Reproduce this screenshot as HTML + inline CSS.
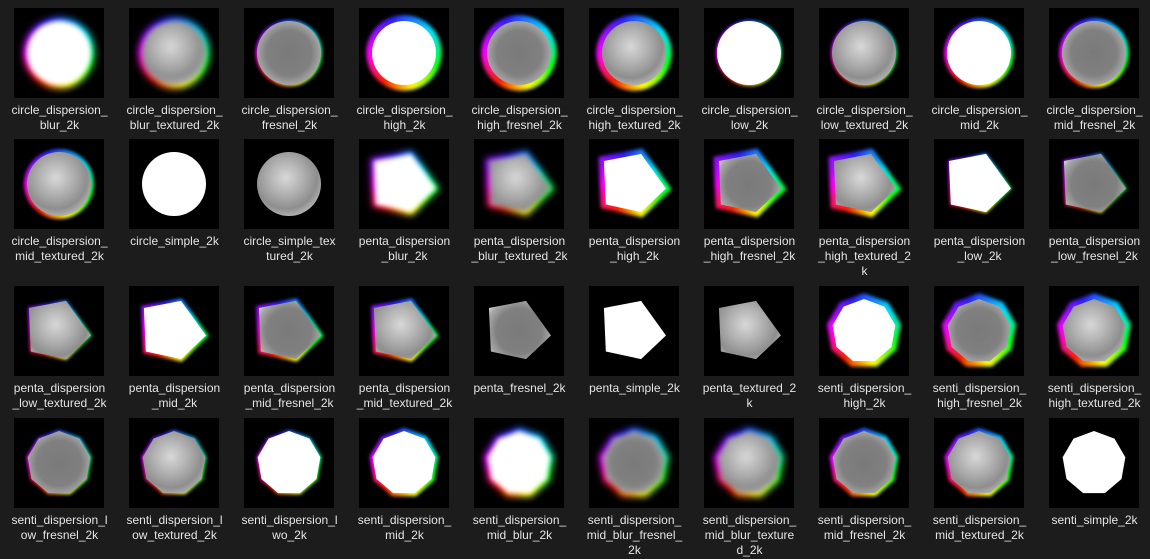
<!DOCTYPE html>
<html><head><meta charset="utf-8"><style>
html,body{margin:0;padding:0;background:#1c1c1c;width:1150px;height:559px;overflow:hidden;font-family:"Liberation Sans",Arial,sans-serif}
.i{position:absolute;width:115px}
.t{position:absolute;left:11px;top:0;width:90px;height:90px;background:#000;overflow:hidden}
.n{position:absolute;top:95px;left:0;width:113px;text-align:center;color:#e4e4e4;font-size:12px;line-height:15px}
.sh{position:absolute;left:13px;top:13px;width:64px;height:64px}
.in{width:100%;height:100%}
.c{border-radius:50%}
.p{clip-path:polygon(3% 14%,61% 3%,100% 57%,61% 94%,6% 82%)}
.s{clip-path:polygon(50% 0,82% 12%,99% 41%,93% 75%,67% 97%,33% 97%,7% 75%,1% 41%,18% 12%)}
.w{background:#fff}
.x{background:radial-gradient(circle at 45% 40%,#d8d8d8 0,#b4b4b4 30%,#8e8e8e 60%,#c8c8c8 85%,#eee 100%)}
.f{background:radial-gradient(circle,#7a7a7a 0,#808080 50%,#a8a8a8 72%,#fff 95%)}
.d{background:conic-gradient(from -20deg,#3020ff,#00e0ff 70deg,#10ff20 130deg,#ffff00 185deg,#ff2000 235deg,#ff00ff 290deg,#3020ff)}
.b{filter:blur(2.5px)}
</style></head><body>
<div class="i" style="left:3px;top:8px"><div class="t"><div class="sh" style="transform:scale(1.12);filter:blur(3px)"><div class="in c d"></div></div><div class="sh b"><div class="in c w"></div></div></div><div class="n">circle_dispersion_<br>blur_2k</div></div>
<div class="i" style="left:118px;top:8px"><div class="t"><div class="sh" style="transform:scale(1.12);filter:blur(3px)"><div class="in c d"></div></div><div class="sh b"><div class="in c x"></div></div></div><div class="n">circle_dispersion_<br>blur_textured_2k</div></div>
<div class="i" style="left:233px;top:8px"><div class="t"><div class="sh" style="transform:scale(1.04);filter:blur(1.5px)"><div class="in c d"></div></div><div class="sh"><div class="in c f"></div></div></div><div class="n">circle_dispersion_<br>fresnel_2k</div></div>
<div class="i" style="left:348px;top:8px"><div class="t"><div class="sh" style="transform:scale(1.18);filter:blur(1.5px)"><div class="in c d"></div></div><div class="sh"><div class="in c w"></div></div></div><div class="n">circle_dispersion_<br>high_2k</div></div>
<div class="i" style="left:463px;top:8px"><div class="t"><div class="sh" style="transform:scale(1.18);filter:blur(1.5px)"><div class="in c d"></div></div><div class="sh"><div class="in c f"></div></div></div><div class="n">circle_dispersion_<br>high_fresnel_2k</div></div>
<div class="i" style="left:578px;top:8px"><div class="t"><div class="sh" style="transform:scale(1.18);filter:blur(1.5px)"><div class="in c d"></div></div><div class="sh"><div class="in c x"></div></div></div><div class="n">circle_dispersion_<br>high_textured_2k</div></div>
<div class="i" style="left:693px;top:8px"><div class="t"><div class="sh" style="transform:scale(1.03);filter:blur(1.5px)"><div class="in c d"></div></div><div class="sh"><div class="in c w"></div></div></div><div class="n">circle_dispersion_<br>low_2k</div></div>
<div class="i" style="left:808px;top:8px"><div class="t"><div class="sh" style="transform:scale(1.03);filter:blur(1.5px)"><div class="in c d"></div></div><div class="sh"><div class="in c x"></div></div></div><div class="n">circle_dispersion_<br>low_textured_2k</div></div>
<div class="i" style="left:923px;top:8px"><div class="t"><div class="sh" style="transform:scale(1.09);filter:blur(1.5px)"><div class="in c d"></div></div><div class="sh"><div class="in c w"></div></div></div><div class="n">circle_dispersion_<br>mid_2k</div></div>
<div class="i" style="left:1038px;top:8px"><div class="t"><div class="sh" style="transform:scale(1.09);filter:blur(1.5px)"><div class="in c d"></div></div><div class="sh"><div class="in c f"></div></div></div><div class="n">circle_dispersion_<br>mid_fresnel_2k</div></div>

<div class="i" style="left:3px;top:139px"><div class="t"><div class="sh" style="transform:scale(1.09);filter:blur(1.5px)"><div class="in c d"></div></div><div class="sh"><div class="in c x"></div></div></div><div class="n">circle_dispersion_<br>mid_textured_2k</div></div>
<div class="i" style="left:118px;top:139px"><div class="t"><div class="sh"><div class="in c w"></div></div></div><div class="n">circle_simple_2k</div></div>
<div class="i" style="left:233px;top:139px"><div class="t"><div class="sh"><div class="in c x"></div></div></div><div class="n">circle_simple_tex<br>tured_2k</div></div>
<div class="i" style="left:348px;top:139px"><div class="t"><div class="sh" style="transform:scale(1.12);filter:blur(3px)"><div class="in p d"></div></div><div class="sh b"><div class="in p w"></div></div></div><div class="n">penta_dispersion<br>_blur_2k</div></div>
<div class="i" style="left:463px;top:139px"><div class="t"><div class="sh" style="transform:scale(1.12);filter:blur(3px)"><div class="in p d"></div></div><div class="sh b"><div class="in p x"></div></div></div><div class="n">penta_dispersion<br>_blur_textured_2k</div></div>
<div class="i" style="left:578px;top:139px"><div class="t"><div class="sh" style="transform:scale(1.18);filter:blur(1.5px)"><div class="in p d"></div></div><div class="sh"><div class="in p w"></div></div></div><div class="n">penta_dispersion<br>_high_2k</div></div>
<div class="i" style="left:693px;top:139px"><div class="t"><div class="sh" style="transform:scale(1.18);filter:blur(1.5px)"><div class="in p d"></div></div><div class="sh"><div class="in p f"></div></div></div><div class="n">penta_dispersion<br>_high_fresnel_2k</div></div>
<div class="i" style="left:808px;top:139px"><div class="t"><div class="sh" style="transform:scale(1.18);filter:blur(1.5px)"><div class="in p d"></div></div><div class="sh"><div class="in p x"></div></div></div><div class="n">penta_dispersion<br>_high_textured_2<br>k</div></div>
<div class="i" style="left:923px;top:139px"><div class="t"><div class="sh" style="transform:scale(1.03);filter:blur(1.5px)"><div class="in p d"></div></div><div class="sh"><div class="in p w"></div></div></div><div class="n">penta_dispersion<br>_low_2k</div></div>
<div class="i" style="left:1038px;top:139px"><div class="t"><div class="sh" style="transform:scale(1.03);filter:blur(1.5px)"><div class="in p d"></div></div><div class="sh"><div class="in p f"></div></div></div><div class="n">penta_dispersion<br>_low_fresnel_2k</div></div>

<div class="i" style="left:3px;top:286px"><div class="t"><div class="sh" style="transform:scale(1.03);filter:blur(1.5px)"><div class="in p d"></div></div><div class="sh"><div class="in p x"></div></div></div><div class="n">penta_dispersion<br>_low_textured_2k</div></div>
<div class="i" style="left:118px;top:286px"><div class="t"><div class="sh" style="transform:scale(1.09);filter:blur(1.5px)"><div class="in p d"></div></div><div class="sh"><div class="in p w"></div></div></div><div class="n">penta_dispersion<br>_mid_2k</div></div>
<div class="i" style="left:233px;top:286px"><div class="t"><div class="sh" style="transform:scale(1.09);filter:blur(1.5px)"><div class="in p d"></div></div><div class="sh"><div class="in p f"></div></div></div><div class="n">penta_dispersion<br>_mid_fresnel_2k</div></div>
<div class="i" style="left:348px;top:286px"><div class="t"><div class="sh" style="transform:scale(1.09);filter:blur(1.5px)"><div class="in p d"></div></div><div class="sh"><div class="in p x"></div></div></div><div class="n">penta_dispersion<br>_mid_textured_2k</div></div>
<div class="i" style="left:463px;top:286px"><div class="t"><div class="sh"><div class="in p f"></div></div></div><div class="n">penta_fresnel_2k</div></div>
<div class="i" style="left:578px;top:286px"><div class="t"><div class="sh"><div class="in p w"></div></div></div><div class="n">penta_simple_2k</div></div>
<div class="i" style="left:693px;top:286px"><div class="t"><div class="sh"><div class="in p x"></div></div></div><div class="n">penta_textured_2<br>k</div></div>
<div class="i" style="left:808px;top:286px"><div class="t"><div class="sh" style="transform:scale(1.18);filter:blur(1.5px)"><div class="in s d"></div></div><div class="sh"><div class="in s w"></div></div></div><div class="n">senti_dispersion_<br>high_2k</div></div>
<div class="i" style="left:923px;top:286px"><div class="t"><div class="sh" style="transform:scale(1.18);filter:blur(1.5px)"><div class="in s d"></div></div><div class="sh"><div class="in s f"></div></div></div><div class="n">senti_dispersion_<br>high_fresnel_2k</div></div>
<div class="i" style="left:1038px;top:286px"><div class="t"><div class="sh" style="transform:scale(1.18);filter:blur(1.5px)"><div class="in s d"></div></div><div class="sh"><div class="in s x"></div></div></div><div class="n">senti_dispersion_<br>high_textured_2k</div></div>

<div class="i" style="left:3px;top:418px"><div class="t"><div class="sh" style="transform:scale(1.04);filter:blur(1.5px)"><div class="in s d"></div></div><div class="sh"><div class="in s f"></div></div></div><div class="n">senti_dispersion_l<br>ow_fresnel_2k</div></div>
<div class="i" style="left:118px;top:418px"><div class="t"><div class="sh" style="transform:scale(1.04);filter:blur(1.5px)"><div class="in s d"></div></div><div class="sh"><div class="in s x"></div></div></div><div class="n">senti_dispersion_l<br>ow_textured_2k</div></div>
<div class="i" style="left:233px;top:418px"><div class="t"><div class="sh" style="transform:scale(1.04);filter:blur(1.5px)"><div class="in s d"></div></div><div class="sh"><div class="in s w"></div></div></div><div class="n">senti_dispersion_l<br>wo_2k</div></div>
<div class="i" style="left:348px;top:418px"><div class="t"><div class="sh" style="transform:scale(1.1);filter:blur(1.5px)"><div class="in s d"></div></div><div class="sh"><div class="in s w"></div></div></div><div class="n">senti_dispersion_<br>mid_2k</div></div>
<div class="i" style="left:463px;top:418px"><div class="t"><div class="sh" style="transform:scale(1.12);filter:blur(3px)"><div class="in s d"></div></div><div class="sh b"><div class="in s w"></div></div></div><div class="n">senti_dispersion_<br>mid_blur_2k</div></div>
<div class="i" style="left:578px;top:418px"><div class="t"><div class="sh" style="transform:scale(1.12);filter:blur(3px)"><div class="in s d"></div></div><div class="sh b"><div class="in s f"></div></div></div><div class="n">senti_dispersion_<br>mid_blur_fresnel_<br>2k</div></div>
<div class="i" style="left:693px;top:418px"><div class="t"><div class="sh" style="transform:scale(1.12);filter:blur(3px)"><div class="in s d"></div></div><div class="sh b"><div class="in s x"></div></div></div><div class="n">senti_dispersion_<br>mid_blur_texture<br>d_2k</div></div>
<div class="i" style="left:808px;top:418px"><div class="t"><div class="sh" style="transform:scale(1.1);filter:blur(1.5px)"><div class="in s d"></div></div><div class="sh"><div class="in s f"></div></div></div><div class="n">senti_dispersion_<br>mid_fresnel_2k</div></div>
<div class="i" style="left:923px;top:418px"><div class="t"><div class="sh" style="transform:scale(1.1);filter:blur(1.5px)"><div class="in s d"></div></div><div class="sh"><div class="in s x"></div></div></div><div class="n">senti_dispersion_<br>mid_textured_2k</div></div>
<div class="i" style="left:1038px;top:418px"><div class="t"><div class="sh"><div class="in s w"></div></div></div><div class="n">senti_simple_2k</div></div>
</body></html>
